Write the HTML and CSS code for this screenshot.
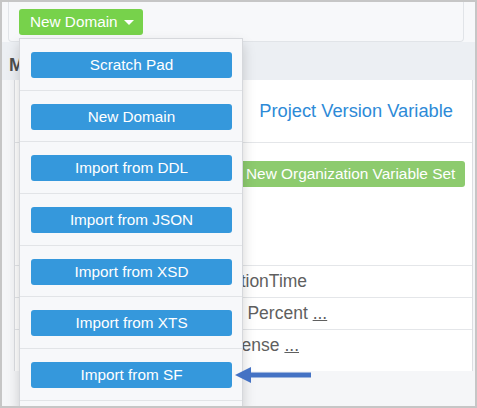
FILE: index.html
```html
<!DOCTYPE html>
<html>
<head>
<meta charset="utf-8">
<link rel="stylesheet" href="styles.css">
</head>
<body>
<div class="frame">
  <div class="topbar-wrap">
    <div class="topbar">
      <button class="btn-green">New Domain<span class="caret"></span></button>
    </div>
  </div>
  <div class="heading-band"><h2 class="heading">Models</h2></div>
  <div class="content-wrap">
    <div class="panel">
      <div class="pv-row"><a class="pv-link">Project Version Variable</a></div>
      <div class="btn-row"><button class="btn-org">New Organization Variable Set</button></div>
      <div class="rows">
        <div class="row">ExecutionTime</div>
        <div class="row">Usage Percent <u class="more">...</u></div>
        <div class="row">No License <u class="more">...</u></div>
      </div>
    </div>
  </div>
  <ul class="dropdown">
    <li class="item"><button class="btn-blue">Scratch Pad</button></li>
    <li class="item"><button class="btn-blue">New Domain</button></li>
    <li class="item"><button class="btn-blue">Import from DDL</button></li>
    <li class="item"><button class="btn-blue">Import from JSON</button></li>
    <li class="item"><button class="btn-blue">Import from XSD</button></li>
    <li class="item"><button class="btn-blue">Import from XTS</button></li>
    <li class="item"><button class="btn-blue">Import from SF</button></li>
  </ul>
  <svg class="arrow" width="82" height="22" viewBox="0 0 82 22">
    <polygon points="2,11 18,3 18,19" fill="#4472c4"/>
    <rect x="16" y="8.5" width="62" height="5" fill="#4472c4"/>
  </svg>
</div>
</body>
</html>
```

FILE: styles.css
```css
html, body {
  margin: 0;
  padding: 0;
}
body {
  font-family: "Liberation Sans", Arial, sans-serif;
  background: #ffffff;
}
.frame {
  position: relative;
  width: 477px;
  height: 408px;
  box-sizing: border-box;
  border: 2px solid #c6c6c6;
  overflow: hidden;
  background: #f5f6f8;
}
.topbar-wrap {
  background: #f7f8fa;
  padding: 0 11px 0 6px;
}
.topbar {
  box-sizing: border-box;
  height: 40px;
  background: #f7f8fa;
  border: 1px solid #e1e4e8;
  border-top: none;
  border-radius: 0 0 4px 4px;
  padding: 7px 0 0 10px;
}
.btn-green {
  display: flex;
  align-items: center;
  height: 26px;
  padding: 0 9px 0 11px;
  border: none;
  border-radius: 3px;
  background: #77d24b;
  color: #ffffff;
  font-family: inherit;
  font-size: 15.3px;
}
.caret {
  display: inline-block;
  margin-left: 6px;
  width: 0;
  height: 0;
  border-left: 5px solid transparent;
  border-right: 5px solid transparent;
  border-top: 5px solid #ffffff;
}
.heading-band {
  height: 38px;
  box-sizing: border-box;
  background: #eceff3;
  padding: 8px 0 0 7px;
}
.heading {
  margin: 0;
  font-size: 18px;
  line-height: 30px;
  font-weight: bold;
  color: #4e4e4e;
}
.content-wrap {
  padding: 0 2px 0 3px;
  background: #f5f6f8;
}
.content-inner {
  border-left: 1px solid #e2e4e7;
}
.panel {
  margin-left: 9px;
  background: #ffffff;
  border-left: 1px solid #dcdee2;
  border-right: 1px solid #dcdee2;
  padding-bottom: 10px;
}
.pv-row {
  height: 62px;
  display: flex;
  align-items: center;
  justify-content: flex-end;
  padding-right: 19px;
  border-bottom: 1px solid #e4e6e9;
}
.pv-link {
  color: #2d8ad7;
  font-size: 18.3px;
}
.btn-row {
  padding: 18px 0 0 221px;
  margin-bottom: 78px;
}
.btn-org {
  display: block;
  height: 26px;
  padding: 0 10px;
  border: none;
  border-radius: 3px;
  background: #8dcb6e;
  color: #ffffff;
  font-family: inherit;
  font-size: 15.4px;
  white-space: nowrap;
}
.row {
  height: 32px;
  box-sizing: border-box;
  border-top: 1px solid #e4e6e9;
  padding-left: 177px;
  display: flex;
  align-items: center;
  font-size: 17.5px;
  color: #5f5f5f;
  white-space: pre;
}
.more {
  color: #5f5f5f;
}
.dropdown {
  position: absolute;
  left: 17px;
  top: 36px;
  width: 224px;
  box-sizing: border-box;
  margin: 0;
  padding: 0 0 6px 0;
  list-style: none;
  background: #f7f8fa;
  border: 1px solid #d6d8dc;
  box-shadow: 0 6px 12px rgba(0, 0, 0, 0.175);
}
.item {
  padding: 13px 10px 11.67px 11px;
  border-bottom: 1px solid #e2e4e7;
}
.btn-blue {
  display: block;
  width: 100%;
  height: 26px;
  border: none;
  border-radius: 3px;
  background: #3598dc;
  color: #ffffff;
  font-family: inherit;
  font-size: 15.3px;
  text-align: center;
  padding: 0;
}
.arrow {
  position: absolute;
  left: 231px;
  top: 362px;
}
```
